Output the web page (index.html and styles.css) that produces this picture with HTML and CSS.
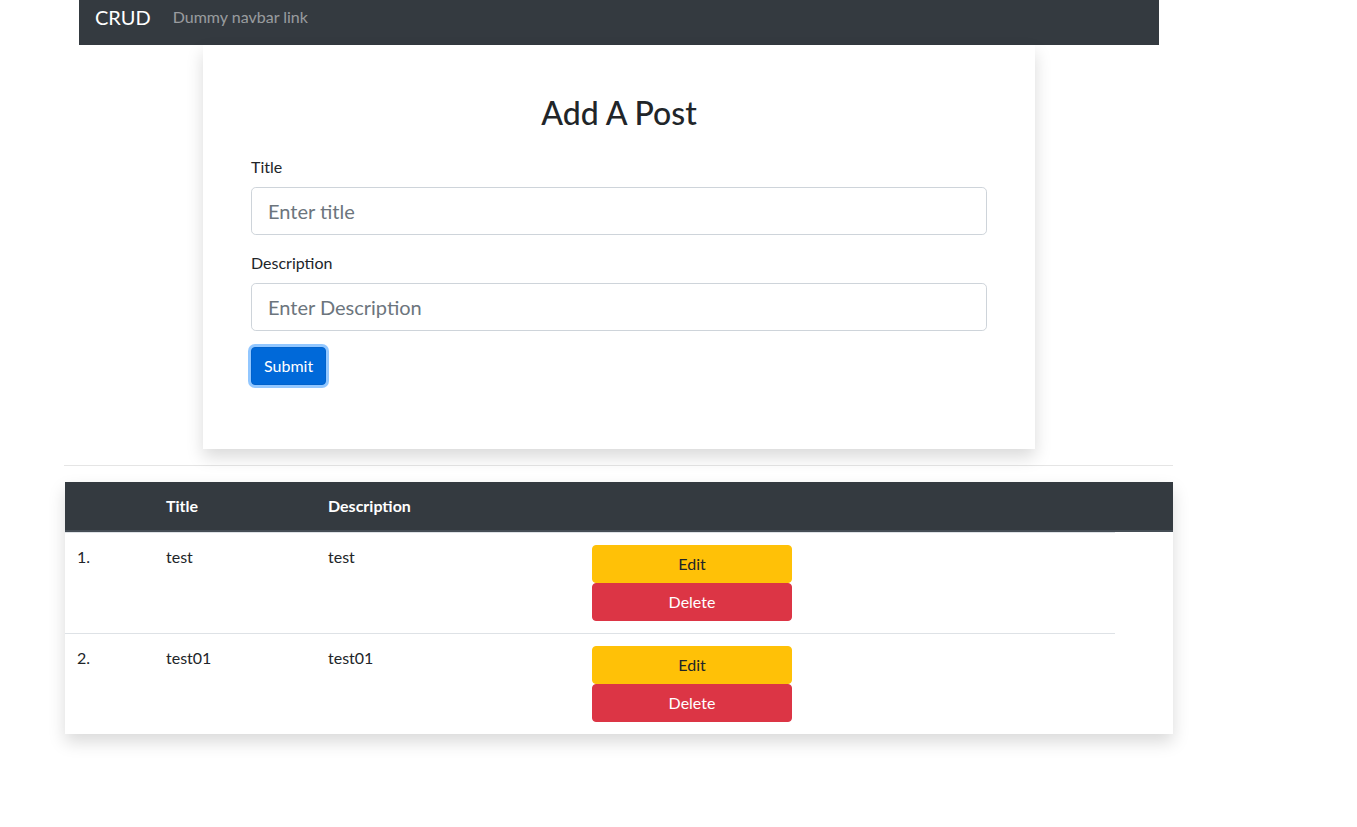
FILE: index.html
```html
<!DOCTYPE html>
<html lang="en">
<head>
<meta charset="utf-8">
<title>CRUD</title>
<link rel="stylesheet" href="styles.css">
</head>
<body>
<nav class="navbar">
  <a class="brand" href="#">CRUD</a>
  <a class="nav-link" href="#">Dummy navbar link</a>
</nav>

<section class="card">
  <h2 class="card-title">Add A Post</h2>
  <form class="form">
    <div class="form-group">
      <label class="label" for="title">Title</label>
      <input class="input" id="title" type="text" placeholder="Enter title">
    </div>
    <div class="form-group">
      <label class="label" for="desc">Description</label>
      <input class="input" id="desc" type="text" placeholder="Enter Description">
    </div>
    <button type="button" class="btn btn-primary">Submit</button>
  </form>
</section>

<hr class="divider">

<section class="table-wrap">
  <div class="row head">
    <div class="cell"></div>
    <div class="cell">Title</div>
    <div class="cell">Description</div>
    <div class="cell"></div>
  </div>
  <div class="row body first">
    <div class="cell">1.</div>
    <div class="cell">test</div>
    <div class="cell">test</div>
    <div class="cell actions">
      <button type="button" class="btn btn-edit">Edit</button>
      <button type="button" class="btn btn-delete">Delete</button>
    </div>
  </div>
  <div class="row body">
    <div class="cell">2.</div>
    <div class="cell">test01</div>
    <div class="cell">test01</div>
    <div class="cell actions">
      <button type="button" class="btn btn-edit">Edit</button>
      <button type="button" class="btn btn-delete">Delete</button>
    </div>
  </div>
</section>
</body>
</html>
```

FILE: styles.css
```css
* { box-sizing: border-box; }

html, body {
  margin: 0;
  padding: 0;
  background: #fff;
}

body {
  font-family: "Lato", "Liberation Sans", sans-serif;
  font-size: 16px;
  line-height: 1.5;
  color: #212529;
  padding-bottom: 60px;
}

.navbar {
  display: flex;
  align-items: flex-start;
  margin-left: 79px;
  width: 1080px;
  height: 45px;
  padding: 2px 16px 0;
  background: #343a40;
}

.brand {
  font-size: 20px;
  line-height: 30px;
  color: #fff;
  text-decoration: none;
  margin-right: 16px;
}

.nav-link {
  padding: 3px 8px 0 6px;
  font-size: 16px;
  line-height: 24px;
  color: rgba(255, 255, 255, 0.5);
  text-decoration: none;
}

.card {
  margin-left: 203px;
  width: 832px;
  padding: 48px 48px 64px;
  background: #fff;
  box-shadow: 0 8px 16px rgba(0, 0, 0, 0.15);
}

.card-title {
  margin: 0 0 24px;
  padding-top: 1px;
  text-align: center;
  font-size: 32px;
  font-weight: 500;
  line-height: 1.2;
  height: 38px;
  color: #212529;
}

.form-group {
  margin-bottom: 16px;
}

.label {
  display: block;
  margin-bottom: 8px;
}

.input {
  display: block;
  width: 100%;
  height: 48px;
  padding: 8px 16px;
  font-family: inherit;
  font-size: 20px;
  line-height: 1.5;
  color: #495057;
  background: #fff;
  border: 1px solid #ced4da;
  border-radius: 4.8px;
}

.input::placeholder {
  color: #6c757d;
}

.btn {
  display: inline-block;
  padding: 6px 12px;
  font-family: inherit;
  font-size: 16px;
  line-height: 24px;
  text-align: center;
  border: 1px solid transparent;
  border-radius: 4px;
  cursor: pointer;
}

.btn-primary {
  color: #fff;
  background: #0069d9;
  border-color: #0062cc;
  box-shadow: 0 0 0 3px rgba(38, 143, 255, 0.5);
}

.divider {
  margin: 16px 0 16px 64px;
  width: 1109px;
  height: 0;
  border: 0;
  border-top: 1px solid rgba(0, 0, 0, 0.1);
}

.table-wrap {
  margin-left: 65px;
  width: 1108px;
  background: #fff;
  box-shadow: 0 8px 16px rgba(0, 0, 0, 0.15);
}

.row {
  display: grid;
  grid-template-columns: 89px 162px 264px 1fr;
}

.cell {
  padding: 12px;
}

.head {
  background: #343a40;
  color: #fff;
  font-weight: 700;
  border-bottom: 2px solid #454d55;
}

.body {
  width: 1050px;
  border-top: 1px solid #dee2e6;
}

.actions {
  display: flex;
  flex-direction: column;
  align-items: flex-start;
}

.btn-edit,
.btn-delete {
  display: block;
  width: 200px;
}

.btn-edit {
  color: #212529;
  background: #ffc107;
  border-color: #ffc107;
}

.btn-delete {
  color: #fff;
  background: #dc3545;
  border-color: #dc3545;
}
```
